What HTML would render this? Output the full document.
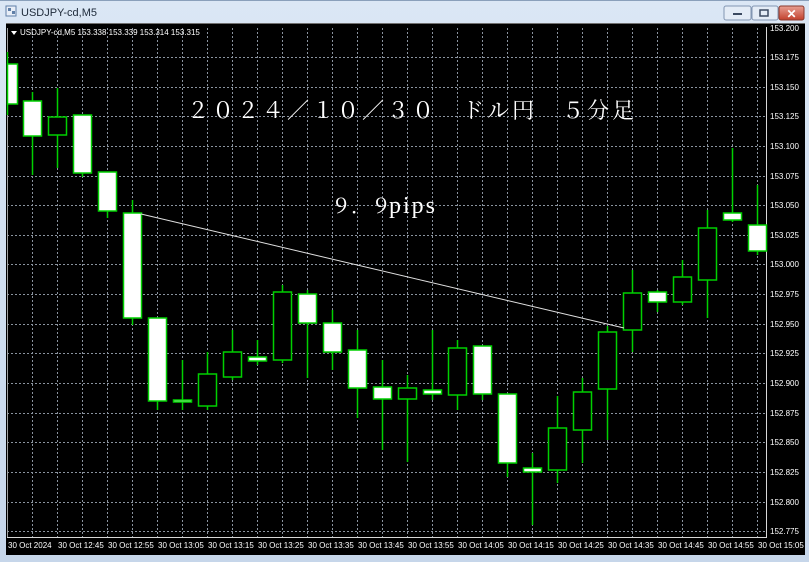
<!DOCTYPE html>
<html><head><meta charset="utf-8"><style>
html,body{margin:0;padding:0;width:809px;height:562px;overflow:hidden;background:#c9d9ec}
svg{display:block}
</style></head><body>
<svg width="809" height="562" viewBox="0 0 809 562" xmlns="http://www.w3.org/2000/svg" font-family="Liberation Sans, sans-serif">
<defs><linearGradient id="tb" x1="0" y1="0" x2="0" y2="1"><stop offset="0" stop-color="#dbe7f5"/><stop offset="1" stop-color="#c6d6ea"/></linearGradient>
<linearGradient id="cl" x1="0" y1="0" x2="0" y2="1"><stop offset="0" stop-color="#e8a093"/><stop offset="1" stop-color="#c2402c"/></linearGradient></defs>
<rect width="809" height="562" fill="url(#tb)"/>
<rect x="0" y="0" width="809" height="1" fill="#8aa0bb"/>
<rect x="6" y="6" width="10" height="10" fill="#e8eef7" stroke="#5f7fa8"/>
<rect x="8" y="8" width="3" height="3" fill="#5f7fa8"/><rect x="12" y="11" width="3" height="3" fill="#5f7fa8"/>
<text x="21" y="16" font-size="11" fill="#1e2a3a">USDJPY-cd,M5</text>
<rect x="724" y="6" width="27" height="14" rx="2" fill="#e4ecf6" stroke="#8296b2"/>
<rect x="733" y="13" width="9" height="2" fill="#3b4a60"/>
<rect x="752" y="6" width="26" height="14" rx="2" fill="#e4ecf6" stroke="#8296b2"/>
<rect x="760" y="10" width="8" height="6" fill="none" stroke="#3b4a60" stroke-width="1.5"/>
<rect x="779" y="6" width="25" height="14" rx="2" fill="url(#cl)" stroke="#8a3a2e"/>
<text x="791.5" y="18" font-size="12" font-weight="bold" fill="#fff" text-anchor="middle">✕</text>
<rect x="6" y="23" width="799" height="532" fill="#000"/>
<rect x="6" y="23" width="799" height="1" fill="#707070"/>
<g stroke="#8a939f" stroke-width="1" stroke-dasharray="2,2">
<path d="M7 57.5H766M7 87.5H766M7 116.5H766M7 146.5H766M7 176.5H766M7 205.5H766M7 235.5H766M7 264.5H766M7 294.5H766M7 324.5H766M7 353.5H766M7 383.5H766M7 413.5H766M7 442.5H766M7 472.5H766M7 502.5H766M7 531.5H766"/>
<path d="M32.5 28V537M57.5 28V537M82.5 28V537M107.5 28V537M132.5 28V537M157.5 28V537M182.5 28V537M207.5 28V537M232.5 28V537M257.5 28V537M282.5 28V537M307.5 28V537M332.5 28V537M357.5 28V537M382.5 28V537M407.5 28V537M432.5 28V537M457.5 28V537M482.5 28V537M507.5 28V537M532.5 28V537M557.5 28V537M582.5 28V537M607.5 28V537M632.5 28V537M657.5 28V537M682.5 28V537M707.5 28V537M732.5 28V537M757.5 28V537"/>
</g>
<path d="M766.5 27V537.5H7" stroke="#d8d8d8" fill="none"/>
<path d="M7.5 28V537" stroke="#a0a0a0"/>
<path d="M11 31h6l-3 4z" fill="#fff"/>
<text x="20" y="35" font-size="8" fill="#fff">USDJPY-cd,M5  153.338 153.339 153.314 153.315</text>
<g font-size="8" fill="#fff">
<text x="770" y="31">153.200</text><text x="770" y="60">153.175</text><text x="770" y="90">153.150</text><text x="770" y="119">153.125</text><text x="770" y="149">153.100</text><text x="770" y="179">153.075</text><text x="770" y="208">153.050</text><text x="770" y="238">153.025</text><text x="770" y="267">153.000</text><text x="770" y="297">152.975</text><text x="770" y="327">152.950</text><text x="770" y="356">152.925</text><text x="770" y="386">152.900</text><text x="770" y="416">152.875</text><text x="770" y="445">152.850</text><text x="770" y="475">152.825</text><text x="770" y="505">152.800</text><text x="770" y="534">152.775</text>
</g>
<g font-size="8" fill="#fff">
<text x="8" y="548">30 Oct 2024</text><text x="58" y="548">30 Oct 12:45</text><text x="108" y="548">30 Oct 12:55</text><text x="158" y="548">30 Oct 13:05</text><text x="208" y="548">30 Oct 13:15</text><text x="258" y="548">30 Oct 13:25</text><text x="308" y="548">30 Oct 13:35</text><text x="358" y="548">30 Oct 13:45</text><text x="408" y="548">30 Oct 13:55</text><text x="458" y="548">30 Oct 14:05</text><text x="508" y="548">30 Oct 14:15</text><text x="558" y="548">30 Oct 14:25</text><text x="608" y="548">30 Oct 14:35</text><text x="658" y="548">30 Oct 14:45</text><text x="708" y="548">30 Oct 14:55</text><text x="758" y="548">30 Oct 15:05</text>
</g>
<g stroke="#00d000" stroke-width="1.5">
<path d="M7.5 52V115M32.5 92V175M57.5 88V168M82.5 115V177M107.5 172V218M132.5 200V325M157.5 318V410M182.5 360V410M207.5 352V410M232.5 330V380M257.5 340V365M282.5 285V363M307.5 290V378M332.5 310V370M357.5 330V418M382.5 360V450M407.5 375V462M432.5 330V400M457.5 340V410M482.5 346V400M507.5 394V477M532.5 453V525M557.5 396V483M582.5 378V463M607.5 326V440M632.5 270V352M657.5 290V312M682.5 260V305M707.5 210V318M732.5 148V222M757.5 185V255"/>
</g>
<g stroke="#00d000" stroke-width="1.5" fill="#fff">
<rect x="7.5" y="64" width="10" height="40"/>
<rect x="23.5" y="101" width="18" height="35"/>
<rect x="73.5" y="115" width="18" height="58"/>
<rect x="98.5" y="172" width="18" height="39"/>
<rect x="123.5" y="213" width="18" height="105"/>
<rect x="148.5" y="318" width="18" height="83"/>
<rect x="173.5" y="400" width="18" height="2"/>
<rect x="248.5" y="357" width="18" height="4"/>
<rect x="298.5" y="294" width="18" height="29"/>
<rect x="323.5" y="323" width="18" height="29"/>
<rect x="348.5" y="350" width="18" height="38"/>
<rect x="373.5" y="387" width="18" height="12"/>
<rect x="423.5" y="390" width="18" height="4"/>
<rect x="473.5" y="346" width="18" height="48"/>
<rect x="498.5" y="394" width="18" height="69"/>
<rect x="523.5" y="468" width="18" height="4"/>
<rect x="648.5" y="292" width="18" height="10"/>
<rect x="723.5" y="213" width="18" height="7"/>
<rect x="748.5" y="225" width="18" height="26"/>
</g>
<g stroke="#00d000" stroke-width="1.5" fill="#000">
<rect x="48.5" y="117" width="18" height="18"/>
<rect x="198.5" y="374" width="18" height="32"/>
<rect x="223.5" y="352" width="18" height="25"/>
<rect x="273.5" y="292" width="18" height="68"/>
<rect x="398.5" y="388" width="18" height="11"/>
<rect x="448.5" y="348" width="18" height="47"/>
<rect x="548.5" y="428" width="18" height="42"/>
<rect x="573.5" y="392" width="18" height="38"/>
<rect x="598.5" y="332" width="18" height="57"/>
<rect x="623.5" y="293" width="18" height="37"/>
<rect x="673.5" y="277" width="18" height="25"/>
<rect x="698.5" y="228" width="18" height="52"/>
</g>
<line x1="141" y1="214" x2="624" y2="328" stroke="#e0e0e0" stroke-width="1"/>
<g font-family="Liberation Serif, Noto Serif CJK SC, serif" fill="#fff">
<text x="187" y="118" font-size="22" letter-spacing="3">２０２４／１０／３０　ドル円　５分足</text>
<text x="331" y="213" font-size="20">９．９</text>
<text x="389" y="213" font-size="24" letter-spacing="2">pips</text>
</g>
</svg>
</body></html>
